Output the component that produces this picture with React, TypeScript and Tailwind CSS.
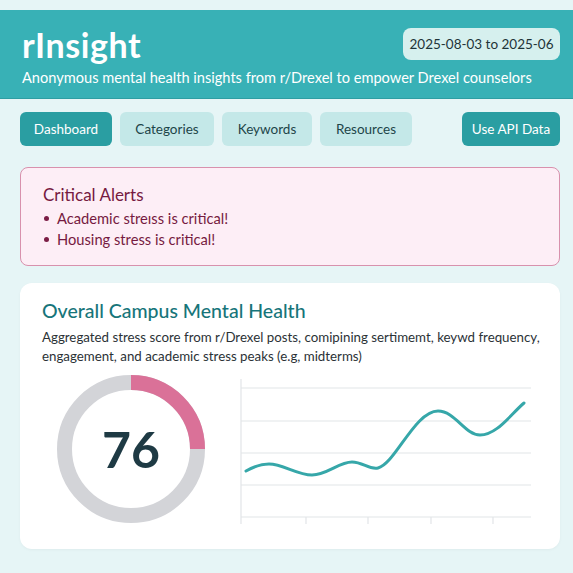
export default function App() {
  const tabs = [
    { label: "Dashboard", w: "w-[92px]", active: true },
    { label: "Categories", w: "w-[94px]", active: false },
    { label: "Keywords", w: "w-[90px]", active: false },
    { label: "Resources", w: "w-[92px]", active: false },
  ];

  return (
    <div
      className="min-h-[573px] bg-[#e6f5f6] pt-[10px] text-[#1f2f33]"
      style={{ fontFamily: 'Lato, "Noto Sans", sans-serif' }}
    >
      {/* Header */}
      <header className="h-[89px] border-b border-[#2e9ea3] bg-[#38b1b6] pl-[22px] pr-[13px]">
        <div className="flex items-start justify-between pt-[18px]">
          <h1 className="text-[34px] font-bold leading-[34px] tracking-[0.6px] text-white">rInsight</h1>
          <div className="flex h-[32px] w-[157px] items-center justify-center whitespace-nowrap rounded-lg bg-[#d6f0ee] text-[13.5px] text-[#1e3438]">
            2025-08-03 to 2025-06
          </div>
        </div>
        <p className="mt-[6px] text-[14.6px] leading-[20px] text-white">
          Anonymous mental health insights from r/Drexel to empower Drexel counselors
        </p>
      </header>

      <main className="pl-[20px] pr-[13px]">
        {/* Nav */}
        <nav className="mt-[13px] flex items-center gap-[8px]">
          {tabs.map((t) => (
            <button
              key={t.label}
              className={
                t.active
                  ? `${t.w} h-[34px] rounded-md bg-[#2a9ea2] text-[13.5px] text-white`
                  : `${t.w} h-[34px] rounded-md bg-[#c4e8e8] text-[13.5px] text-[#1d4548]`
              }
            >
              {t.label}
            </button>
          ))}
          <button className="ml-auto h-[34px] w-[98px] rounded-md bg-[#2a9ea2] text-[13.5px] text-white">
            Use API Data
          </button>
        </nav>

        {/* Alerts */}
        <section className="mt-[21px] h-[99px] rounded-lg border border-[#d891ad] bg-[#fdeef6] px-[22px] pt-[16px] text-[#761a41]">
          <h2 className="text-[17px] leading-[22px]">Critical Alerts</h2>
          <ul className="mt-[2px] text-[14.7px] leading-[21px]">
            <li className="flex items-center gap-[8px] pl-[1px]">
              <span className="h-[5px] w-[5px] rounded-full bg-[#7b1d45]" />
              Academic streıss is critical!
            </li>
            <li className="flex items-center gap-[8px] pl-[1px]">
              <span className="h-[5px] w-[5px] rounded-full bg-[#7b1d45]" />
              Housing stress is critical!
            </li>
          </ul>
        </section>

        {/* Overall card */}
        <section className="mt-[17px] h-[266px] rounded-xl bg-white pl-[22px] pr-[18px] pt-[15px] shadow-[0_1px_3px_rgba(0,0,0,0.04)]">
          <h2 className="text-[19.5px] font-medium leading-[26px] text-[#17757a]">Overall Campus Mental Health</h2>
          <p className="mt-[4px] text-[13.3px] leading-[19px] text-[#2b3236]">
            Aggregated stress score from r/Drexel posts, comipining sertimemt, keywd frequency, engagement, and
            academic stress peaks (e.g, midterms)
          </p>

          <div className="mt-[8px] flex items-start">
            {/* Donut */}
            <div className="relative ml-[14px] h-[150px] w-[150px]">
              <svg width="150" height="150" viewBox="0 0 150 150">
                <circle cx="75" cy="75" r="66.5" fill="none" stroke="#d3d4d8" strokeWidth="15" />
                <path d="M75 8.5 A66.5 66.5 0 0 1 141.5 75" fill="none" stroke="#da7198" strokeWidth="15" />
              </svg>
              <div className="absolute inset-0 flex items-center justify-center text-[50px] font-bold text-[#1e3a44]">
                76
              </div>
            </div>

            {/* Trend chart */}
            <svg className="ml-[29px] mt-[2px]" width="300" height="150" viewBox="0 0 300 150">
              {[12, 45, 77, 109, 141].map((y) => (
                <line key={y} x1="6" x2="296" y1={y} y2={y} stroke="#e2e5e8" strokeWidth="1.2" />
              ))}
              <line x1="6" x2="6" y1="3" y2="148" stroke="#e2e5e8" strokeWidth="1.2" />
              {[71, 133, 196, 258].map((x) => (
                <line key={x} x1={x} x2={x} y1="141" y2="148" stroke="#e2e5e8" strokeWidth="1.2" />
              ))}
              <path
                d="M11,95 C20,90 26,88 34,88 C48,88 62,99 77,99 C92,99 104,86 117,86 C128,86 134,94 143,92 C160,88 180,35 203,35 C220,35 230,59 245,59 C262,59 276,38 289,27"
                fill="none"
                stroke="#36a7a9"
                strokeWidth="3"
                strokeLinecap="round"
              />
            </svg>
          </div>
        </section>
      </main>
    </div>
  );
}
